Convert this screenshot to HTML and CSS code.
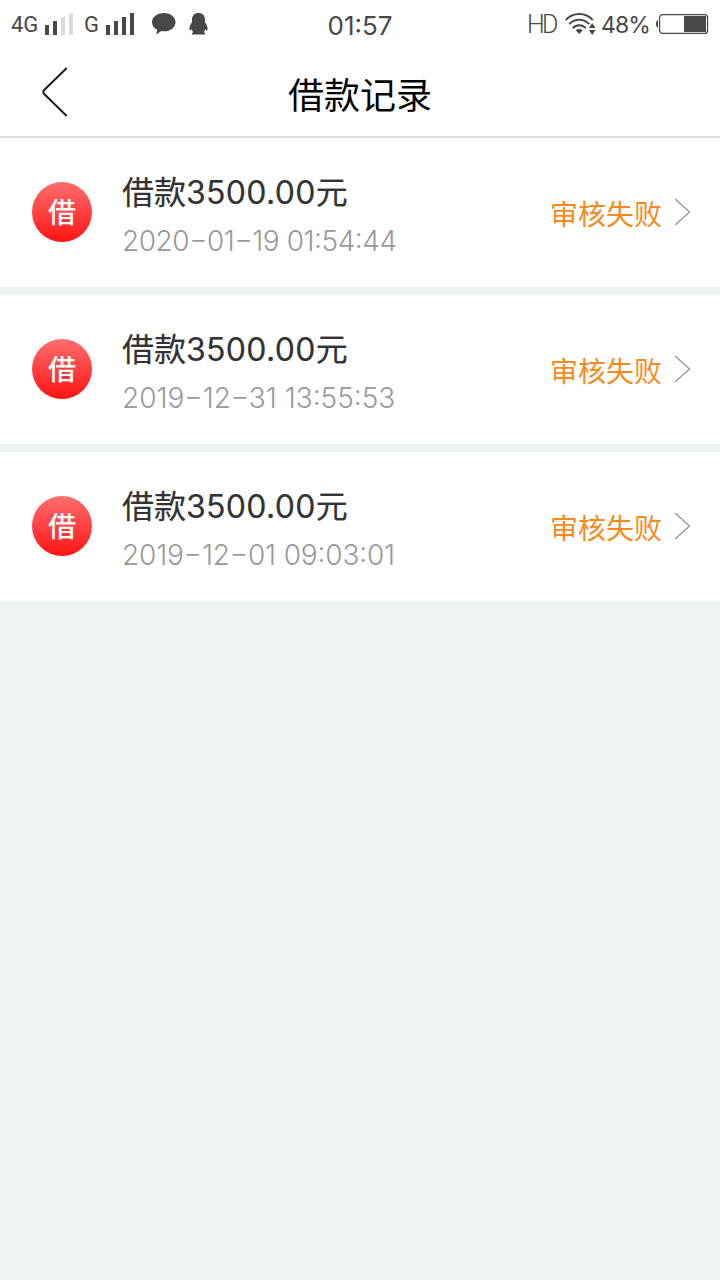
FILE: index.html
```
<!DOCTYPE html>
<html lang="zh-CN">
<head>
    <meta charset="UTF-8">
    <meta name="viewport" content="width=device-width, initial-scale=1.0">
    <title>借款记录</title>
    <link rel="stylesheet" href="styles.css">
</head>
<body>
    <div class="status-bar">
        <div class="status-left">
            <span class="network network-4g">4G</span>
            <svg class="signal" width="29" height="22" viewBox="0 0 29 22">
                <path fill="#484848" d="M0 12h4v10H0zM8 8h4v14H8z"/>
                <path fill="#dadada" d="M16 4h4v18h-4zM24 0h4v22h-4z"/>
            </svg>
            <span class="network network-g">G</span>
            <svg class="signal" width="29" height="22" viewBox="0 0 29 22">
                <path fill="#484848" d="M0 12h4v10H0zM8 8h4v14H8zM16 4h4v18h-4zM24 0h4v22h-4z"/>
            </svg>
            <svg class="chat-icon" width="24" height="22" viewBox="0 0 24 22">
                <path fill="#484848" d="M12 0C5.200 0 0 4 0 9.200c0 3.200 2 6 5.200 7.600L4.300 21.500l5-3.400c.9.100 1.800.2 2.700.2 6.500 0 11.500-4 11.500-9.100S18.500 0 12 0z"/>
            </svg>
            <svg class="qq-icon" width="19" height="22" viewBox="0 0 19 22">
                <path fill="#484848" d="M9.500 0C5.500 0 3 2.700 3 6.800v2.400C1.500 11.300.4 13.500.4 15.500c0 1.300.4 2 .9 1.900.5 0 .9-.5 1.400-1.100.3 1.200.8 2.100 1.500 2.900-1 .5-1.600 1-1.400 1.600.2.700 1.500.9 3.300.8l3.400-.2 3.400.2c1.800.1 3.100-.1 3.300-.8.200-.6-.4-1.100-1.400-1.600.7-.8 1.200-1.700 1.500-2.900.5.600.9 1.100 1.400 1.100.5.100.9-.6.900-1.900 0-2-1.100-4.200-2.600-6.300V6.800C16 2.700 13.500 0 9.500 0z"/>
            </svg>
        </div>
        <div class="clock">01:57</div>
        <div class="status-right">
            <span class="hd">HD</span>
            <svg class="wifi-icon" width="31" height="22" viewBox="0 0 31 22">
                <g fill="none" stroke="#484848" stroke-width="1.900">
                    <path d="M.7 7.200C8-1 20.500-1 27.800 7.200"/>
                    <path d="M4.200 11.200c5.400-6 14.700-6 20.100 0"/>
                    <path d="M7.700 15.200c3.600-4 9.500-4 13.100 0"/>
                </g>
                <path fill="#484848" d="M10.700 17.200c2.100-1.700 5-1.700 7.100 0L14.200 21zM27.200 10l3.300 5h-6.600zM27.200 22l3.300-5h-6.600z"/>
            </svg>
            <span class="percent">48%</span>
            <svg class="battery-icon" width="53" height="22" viewBox="0 0 53 22">
                <path fill="#484848" d="M2 7v8C.7 14.300 0 13 0 11s.7-3.300 2-4zM28 3h22v16H28z"/>
                <rect x="3.600" y="1.600" width="48" height="18.800" rx="3" fill="none" stroke="#484848" stroke-width="1.200"/>
            </svg>
        </div>
    </div>

    <div class="header">
        <a class="back" href="#">
            <svg width="28" height="52" viewBox="0 0 28 52">
                <path fill="none" stroke="#111" stroke-width="1.800" d="M25.700 2L3.200 24q-2 2 0 4L25.700 50"/>
            </svg>
        </a>
        <h1>借款记录</h1>
    </div>

    <div class="records">
        <div class="record">
            <div class="record-icon">借</div>
            <div class="record-info">
                <div class="record-title">借款<span class="amount">3500.00</span>元</div>
                <div class="record-time time-tight">2020−01−19 01:54:44</div>
            </div>
            <div class="record-status">审核失败</div>
            <svg class="arrow" width="17" height="28" viewBox="0 0 17 28">
                <path fill="none" stroke="#999" stroke-width="1.400" d="M1 1l14.500 13L1 27"/>
            </svg>
        </div>
        <div class="record">
            <div class="record-icon">借</div>
            <div class="record-info">
                <div class="record-title">借款<span class="amount">3500.00</span>元</div>
                <div class="record-time">2019−12−31 13:55:53</div>
            </div>
            <div class="record-status">审核失败</div>
            <svg class="arrow" width="17" height="28" viewBox="0 0 17 28">
                <path fill="none" stroke="#999" stroke-width="1.400" d="M1 1l14.500 13L1 27"/>
            </svg>
        </div>
        <div class="record">
            <div class="record-icon">借</div>
            <div class="record-info">
                <div class="record-title">借款<span class="amount">3500.00</span>元</div>
                <div class="record-time time-snug">2019−12−01 09:03:01</div>
            </div>
            <div class="record-status">审核失败</div>
            <svg class="arrow" width="17" height="28" viewBox="0 0 17 28">
                <path fill="none" stroke="#999" stroke-width="1.400" d="M1 1l14.500 13L1 27"/>
            </svg>
        </div>
    </div>
</body>
</html>
```
FILE: styles.css
```
* {
    box-sizing: border-box;
}
body {
    font-family: Inter, "Noto Sans CJK SC", sans-serif;
    background-color: #eef3f6;
    color: #333;
    margin: 0;
    min-height: 100vh;
}
svg {
    display: block;
    flex-shrink: 0;
}
/* Phone status bar */
.status-bar {
    display: grid;
    grid-template-columns: 1fr auto 1fr;
    align-items: center;
    height: 50px;
    padding: 0 11px;
    background-color: #fff;
    color: #484848;
    white-space: nowrap;
}
.status-left,
.status-right {
    display: flex;
    align-items: center;
    height: 50px;
    padding-bottom: 2px;
}
.status-right {
    justify-content: flex-end;
}
.network {
    font-family: Roboto, sans-serif;
    font-size: 22px;
}
.network-4g {
    width: 34px;
}
.network-g {
    width: 22px;
    margin-left: 10px;
}
.chat-icon {
    margin-left: 17px;
}
.qq-icon {
    margin-left: 13px;
}
.clock {
    font-size: 26px;
}
.hd {
    font-family: Roboto, sans-serif;
    font-size: 25px;
    font-weight: 300;
    letter-spacing: -2.5px;
}
.wifi-icon {
    margin-left: 9px;
}
.percent {
    font-size: 23px;
    letter-spacing: -0.9px;
    margin: 2px 6px 0 5px;
}
/* Title bar */
.header {
    display: grid;
    grid-template-columns: 100px 1fr 100px;
    align-items: center;
    height: 88px;
    background-color: #fff;
    border-bottom: 2px solid #e0e0e0;
}
.back {
    padding: 0 0 2px 41px;
}
.header h1 {
    margin: 0;
    padding-top: 5px;
    color: #000;
    font-size: 36px;
    font-weight: 400;
    line-height: 52px;
    text-align: center;
}
/* Loan records */
.record {
    display: flex;
    align-items: center;
    height: 149px;
    margin-bottom: 8px;
    padding: 0 29px 1px 32px;
    background-color: #fff;
}
.record-icon {
    width: 60px;
    height: 60px;
    border-radius: 50%;
    background: linear-gradient(#ff6e6e, #ff1414);
    color: #fff;
    font-size: 28px;
    font-weight: 500;
    line-height: 63px;
    text-align: center;
}
.record-info {
    flex: 1;
    margin-left: 30px;
    padding-top: 7px;
    white-space: nowrap;
}
.record-title {
    font-size: 32px;
    font-weight: 400;
    line-height: 50px;
    -webkit-text-stroke: 0.2px #333;
}
.amount {
    letter-spacing: 0.3px;
}
.record-time {
    color: #999;
    font-size: 28px;
    font-weight: 300;
    line-height: 46px;
    font-feature-settings: "case"; /* lifts the dashes to digit height */
}
.time-tight {
    letter-spacing: -0.45px;
}
.time-snug {
    letter-spacing: -0.15px;
}
.record-status {
    padding-top: 5px;
    color: #f78a1d;
    font-size: 28px;
    line-height: 40px;
}
.arrow {
    margin-left: 12px;
}
```
